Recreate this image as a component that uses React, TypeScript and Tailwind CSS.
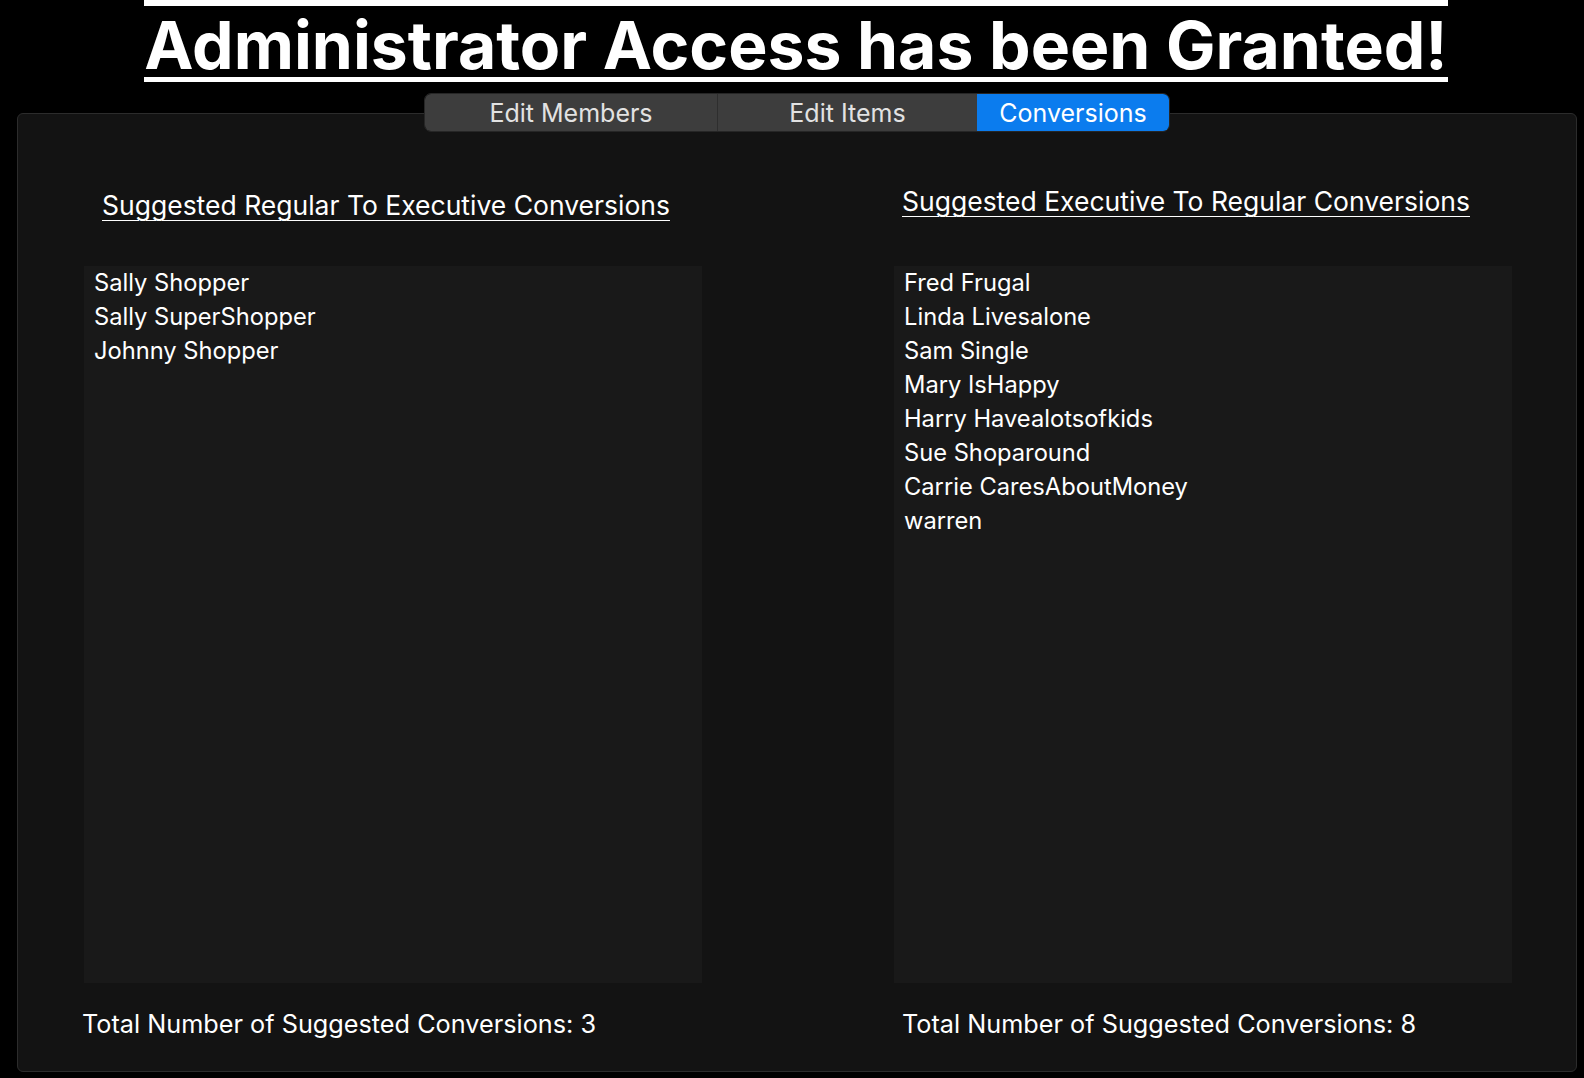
import React from "react";

const left = ["Sally Shopper", "Sally SuperShopper", "Johnny Shopper"];
const right = [
  "Fred Frugal",
  "Linda Livesalone",
  "Sam Single",
  "Mary IsHappy",
  "Harry Havealotsofkids",
  "Sue Shoparound",
  "Carrie CaresAboutMoney",
  "warren",
];

function List({ items }: { items: string[] }) {
  return (
    <div className="h-[717px] w-[618px] bg-[#191919] pl-[10px]">
      {items.map((n) => (
        <div key={n} className="text-[23.7px] leading-[34px] text-white">
          {n}
        </div>
      ))}
    </div>
  );
}

export default function App() {
  return (
    <div
      className="min-h-[1078px] w-full bg-black text-white"
      style={{ fontFamily: "Inter, 'Noto Sans', sans-serif" }}
    >
      <div className="ml-[8px] flex justify-center">
        <h1 className="border-t-[6px] border-b-[5px] border-white pt-[7px] text-[66px] font-bold leading-[64px] text-white">
          Administrator Access has been Granted!
        </h1>
      </div>
      <div className="relative ml-[17px] mr-[7px] mt-[31px] h-[959px] rounded-md border border-[#2c2c2c] bg-[#131313]">
        <div className="absolute left-1/2 top-[-21px] flex h-[39px] -translate-x-1/2 overflow-hidden rounded-[7px] border border-[#262626] text-[25px] text-[#e2e2e2]">
          <div className="flex w-[293px] items-center justify-center border-r border-[#2e2e2e] bg-[#3d3d3d] pt-[2px]">
            Edit Members
          </div>
          <div className="flex w-[259px] items-center justify-center bg-[#3d3d3d] pt-[2px]">
            Edit Items
          </div>
          <div className="flex w-[192px] items-center justify-center bg-[#0b7cee] pt-[2px] text-white">
            Conversions
          </div>
        </div>
        <div className="flex justify-between pl-[66px] pr-[64px]">
          <div className="flex flex-col">
            <div className="mt-[75px] pl-[18px] text-[26.5px] leading-[32px] underline underline-offset-[5px] decoration-1">
              Suggested Regular To Executive Conversions
            </div>
            <div className="mt-[45px]">
              <List items={left} />
            </div>
            <div className="-ml-[2px] mt-[25px] text-[25.25px] leading-[32px]">
              Total Number of Suggested Conversions: 3
            </div>
          </div>
          <div className="flex flex-col">
            <div className="mt-[71px] pl-[8px] text-[26.5px] leading-[32px] underline underline-offset-[5px] decoration-1">
              Suggested Executive To Regular Conversions
            </div>
            <div className="mt-[49px]">
              <List items={right} />
            </div>
            <div className="mt-[25px] pl-[8px] text-[25.25px] leading-[32px]">
              Total Number of Suggested Conversions: 8
            </div>
          </div>
        </div>
      </div>
    </div>
  );
}
